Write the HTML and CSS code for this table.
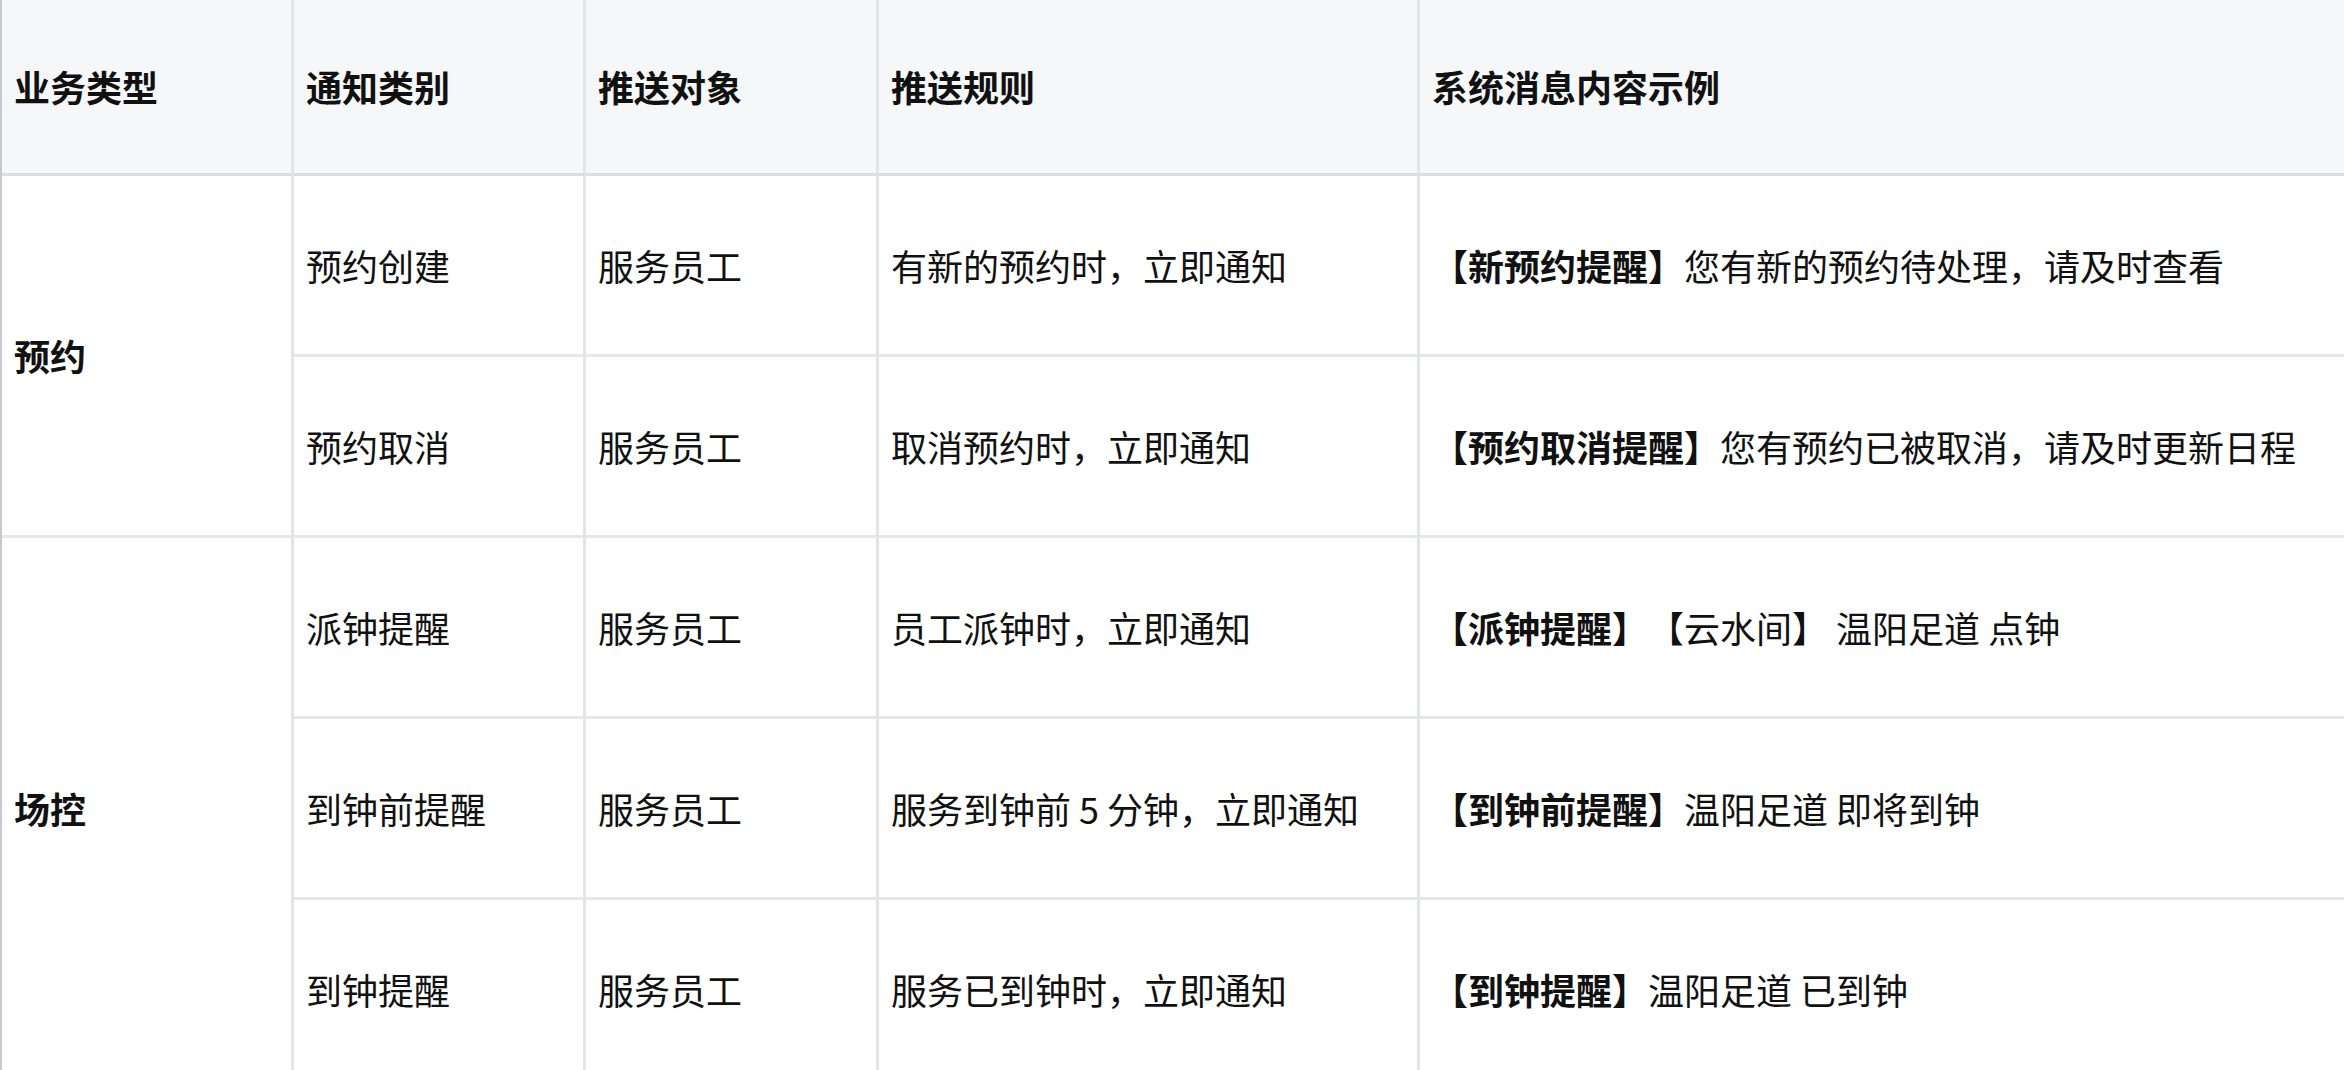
FILE: index.html
```html
<!DOCTYPE html>
<html lang="zh-CN">
<head>
<meta charset="utf-8">
<title>通知规则</title>
<link rel="stylesheet" href="styles.css">
</head>
<body>
<table class="rules">
  <colgroup>
    <col class="c1"><col class="c2"><col class="c3"><col class="c4"><col class="c5">
  </colgroup>
  <thead>
    <tr>
      <th>业务类型</th>
      <th>通知类别</th>
      <th>推送对象</th>
      <th>推送规则</th>
      <th>系统消息内容示例</th>
    </tr>
  </thead>
  <tbody>
    <tr>
      <td class="biz" rowspan="2">预约</td>
      <td>预约创建</td>
      <td>服务员工</td>
      <td>有新的预约时，立即通知</td>
      <td><strong>【新预约提醒】</strong>您有新的预约待处理，请及时查看</td>
    </tr>
    <tr>
      <td>预约取消</td>
      <td>服务员工</td>
      <td>取消预约时，立即通知</td>
      <td><strong>【预约取消提醒】</strong>您有预约已被取消，请及时更新日程</td>
    </tr>
    <tr>
      <td class="biz" rowspan="3">场控</td>
      <td>派钟提醒</td>
      <td>服务员工</td>
      <td>员工派钟时，立即通知</td>
      <td><strong>【派钟提醒】</strong>【云水间】 温阳足道 点钟</td>
    </tr>
    <tr>
      <td>到钟前提醒</td>
      <td>服务员工</td>
      <td>服务到钟前 5 分钟，立即通知</td>
      <td><strong>【到钟前提醒】</strong>温阳足道 即将到钟</td>
    </tr>
    <tr>
      <td>到钟提醒</td>
      <td>服务员工</td>
      <td>服务已到钟时，立即通知</td>
      <td><strong>【到钟提醒】</strong>温阳足道 已到钟</td>
    </tr>
  </tbody>
</table>
</body>
</html>
```

FILE: styles.css
```css
html, body {
  margin: 0;
  padding: 0;
  background: #ffffff;
  overflow: hidden;
}

body {
  font-family: "Noto Sans CJK SC", "Noto Sans", sans-serif;
  font-size: 36px;
  color: #111111;
  text-spacing-trim: space-all;
}

.rules {
  table-layout: fixed;
  border-collapse: separate;
  border-spacing: 0;
  width: 2344px;
  border-left: 2px solid #c6c8cd;
}

.c1 { width: 292px; }
.c2 { width: 292px; }
.c3 { width: 293px; }
.c4 { width: 541px; }
.c5 { width: 924px; }

.rules th,
.rules td {
  box-sizing: border-box;
  padding: 0 12px;
  text-align: left;
  vertical-align: middle;
  white-space: nowrap;
  overflow: hidden;
  border-right: 3px solid #e3e4e6;
  border-bottom: 3px solid #e6e7e9;
  line-height: 1.3;
}

.rules th:last-child,
.rules td:last-child {
  border-right: none;
}

.rules th {
  height: 176px;
  background: #f6f7f9;
  font-weight: 700;
  border-bottom-color: #dcdee1;
}

.rules td {
  height: 181px;
  font-weight: 400;
}

.rules td.biz {
  font-weight: 700;
}

.rules strong {
  font-weight: 700;
}
```
